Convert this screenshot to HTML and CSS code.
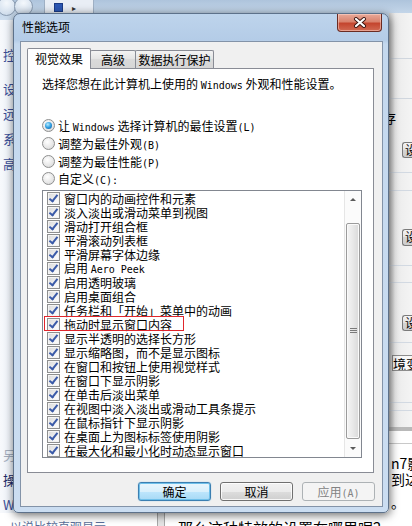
FILE: index.html
```html
<!DOCTYPE html>
<html lang="zh-CN">
<head>
    <meta charset="UTF-8">
    <meta name="viewport" content="width=device-width, initial-scale=1.0">
    <title>性能选项</title>
    <link rel="stylesheet" href="styles.css">
</head>
<body>

    <!-- window behind the dialog -->
    <div class="bg-top">
        <span class="nav-btn"></span>
        <span class="nav-btn"></span>
        <div class="bg-tool"><span class="bg-icon"></span><span class="bg-arrow">▸</span></div>
    </div>

    <div class="bg-left">
        <span class="side">控</span>
        <span class="side gap1">设</span>
        <span class="side">远</span>
        <span class="side">系</span>
        <span class="side">高</span>
        <span class="side gap2 pale">另</span>
        <span class="side dark">操</span>
        <span class="side">W</span>
    </div>

    <div class="bg-right">
        <div class="rp-head"></div>
        <div class="rp-block"></div>
        <span class="rp-char">存</span>
        <span class="rp-btn b1">设</span>
        <div class="rp-line l1"></div>
        <div class="rp-line l2"></div>
        <span class="rp-btn b2">设</span>
        <div class="rp-line l3"></div>
        <div class="rp-line l4"></div>
        <span class="rp-btn b3">设</span>
        <div class="rp-line l5"></div>
        <span class="rp-box">境变</span>
        <div class="rp-line l6"></div>
        <div class="rp-line l7"></div>
        <div class="rp-band"></div>
        <div class="rp-white">
            <div class="rp-sep"></div>
            <p class="rp-text t1">n7影</p>
            <p class="rp-text">到达</p>
            <p class="rp-text t3">。</p>
        </div>
    </div>

    <div class="bg-bottom">
        <span class="bb-left">以说比较直观显示</span>
        <span class="bb-bar"></span>
        <span class="bb-right">那么这种特效的设置在哪里呢？</span>
    </div>

    <!-- the dialog -->
    <div class="dialog">
        <div class="titlebar">
            <span class="title">性能选项</span>
            <button class="close">
                <svg width="14" height="11" viewBox="0 0 14 11">
                    <path d="M3 2 L11 9 M11 2 L3 9" stroke="#3b1410" stroke-width="4" stroke-linecap="round"/>
                    <path d="M3 2 L11 9 M11 2 L3 9" stroke="#ffffff" stroke-width="2.2" stroke-linecap="round"/>
                </svg>
            </button>
        </div>

        <div class="client">
            <div class="tabs">
                <div class="tab active">视觉效果</div>
                <div class="tab t2">高级</div>
                <div class="tab t3">数据执行保护</div>
            </div>

            <div class="panel">
                <p class="intro">选择您想在此计算机上使用的 <span class="lat">Windows</span> 外观和性能设置。</p>

                <div class="radios">
                    <div class="radio"><span class="rd on"></span><span>让 <span class="lat">Windows</span> 选择计算机的最佳设置<span class="lat">(L)</span></span></div>
                    <div class="radio"><span class="rd"></span><span>调整为最佳外观<span class="lat">(B)</span></span></div>
                    <div class="radio"><span class="rd"></span><span>调整为最佳性能<span class="lat">(P)</span></span></div>
                    <div class="radio"><span class="rd"></span><span>自定义<span class="lat">(C):</span></span></div>
                </div>

                <div class="listbox">
                    <div class="items">
                        <div class="item"><span class="cb"></span><span>窗口内的动画控件和元素</span></div>
                        <div class="item"><span class="cb"></span><span>淡入淡出或滑动菜单到视图</span></div>
                        <div class="item"><span class="cb"></span><span>滑动打开组合框</span></div>
                        <div class="item"><span class="cb"></span><span>平滑滚动列表框</span></div>
                        <div class="item"><span class="cb"></span><span>平滑屏幕字体边缘</span></div>
                        <div class="item"><span class="cb"></span><span>启用 <span class="lat">Aero Peek</span></span></div>
                        <div class="item"><span class="cb"></span><span>启用透明玻璃</span></div>
                        <div class="item"><span class="cb"></span><span>启用桌面组合</span></div>
                        <div class="item"><span class="cb"></span><span>任务栏和「开始」菜单中的动画</span></div>
                        <div class="item"><span class="cb"></span><span>拖动时显示窗口内容</span></div>
                        <div class="item"><span class="cb"></span><span>显示半透明的选择长方形</span></div>
                        <div class="item"><span class="cb"></span><span>显示缩略图，而不是显示图标</span></div>
                        <div class="item"><span class="cb"></span><span>在窗口和按钮上使用视觉样式</span></div>
                        <div class="item"><span class="cb"></span><span>在窗口下显示阴影</span></div>
                        <div class="item"><span class="cb"></span><span>在单击后淡出菜单</span></div>
                        <div class="item"><span class="cb"></span><span>在视图中淡入淡出或滑动工具条提示</span></div>
                        <div class="item"><span class="cb"></span><span>在鼠标指针下显示阴影</span></div>
                        <div class="item"><span class="cb"></span><span>在桌面上为图标标签使用阴影</span></div>
                        <div class="item"><span class="cb"></span><span>在最大化和最小化时动态显示窗口</span></div>
                    </div>
                    <div class="scrollbar">
                        <div class="sb-arrow"><span class="tri up"></span></div>
                        <div class="sb-track">
                            <div class="sb-thumb"><span class="grip"></span></div>
                        </div>
                        <div class="sb-arrow"><span class="tri down"></span></div>
                    </div>
                    <div class="mark"></div>
                </div>
            </div>

            <div class="buttons">
                <button class="btn default">确定</button>
                <button class="btn">取消</button>
                <button class="btn disabled">应用<span class="lat">(A)</span></button>
            </div>
        </div>
    </div>

</body>
</html>
```

FILE: styles.css
```css
body {
    margin: 0;
    width: 412px;
    height: 526px;
    overflow: hidden;
    position: relative;
    background: #ffffff;
    font-family: "Noto Sans CJK SC", "Liberation Sans", sans-serif;
    font-size: 12px;
    color: #000;
}
p {
    margin: 0;
}
.lat {
    font-family: "DejaVu Sans Mono", "Liberation Mono", monospace;
    font-size: 10px;
}

/* ---- window behind ---- */
.bg-top {
    position: absolute;
    left: 0;
    top: 0;
    width: 412px;
    height: 20px;
    background: linear-gradient(#aec4dc, #cfdff0);
    display: flex;
    align-items: flex-start;
}
.nav-btn {
    width: 17px;
    height: 17px;
    margin-top: -3px;
    margin-left: -3px;
    border: 1px solid #8a9bb0;
    border-radius: 50%;
    background: radial-gradient(circle at 50% 30%, #f4f8fc, #c6d6e8);
}
.nav-btn + .nav-btn {
    margin-left: -2px;
}
.bg-tool {
    margin-left: 11px;
    width: 48px;
    height: 14px;
    background: #e9eef5;
    border: 1px solid #9fb0c4;
    border-top: none;
    display: flex;
    align-items: center;
}
.bg-icon {
    width: 7px;
    height: 7px;
    margin-left: 9px;
    background: #2c57b3;
    border: 1px solid #1b3b85;
}
.bg-arrow {
    font-size: 8px;
    margin-left: 9px;
    color: #333;
}

.bg-left {
    position: absolute;
    left: 0;
    top: 20px;
    width: 20px;
    height: 506px;
    background: linear-gradient(90deg, #f7f9fc, #e6edf6);
    display: flex;
    flex-direction: column;
    padding-top: 22px;
    box-sizing: border-box;
}
.side {
    height: 25px;
    line-height: 25px;
    padding-left: 3px;
    font-size: 13px;
    color: #3a4e97;
}
.side.gap1 {
    margin-top: 9px;
}
.side.gap2 {
    margin-top: 266px;
}
.side.pale {
    color: #a3adbd;
}
.side.dark {
    color: #1c2c68;
}

.bg-right {
    position: absolute;
    left: 389px;
    top: 13px;
    width: 23px;
    height: 500px;
    background: linear-gradient(90deg, #cfcfcf, #ebebeb 6px, #f4f4f4);
    display: flex;
    flex-direction: column;
}
.rp-head {
    height: 45px;
    border-bottom: 1px solid #d0d6de;
    flex: none;
}
.rp-block {
    height: 39px;
    border-bottom: 1px solid #d0d6de;
    flex: none;
}
.rp-char {
    margin-top: 12px;
    margin-left: -6px;
    height: 14px;
    line-height: 14px;
    font-size: 13px;
}
.rp-btn {
    height: 16px;
    margin-left: 13px;
    box-sizing: border-box;
    border: 1px solid #7a7a7a;
    border-right: none;
    border-radius: 3px 0 0 3px;
    background: linear-gradient(#f4f4f4, #e2e2e2 50%, #d4d4d4 50%, #cdcdcd);
    font-size: 12px;
    line-height: 14px;
    padding-left: 2px;
    overflow: hidden;
    flex: none;
}
.rp-btn.b1 {
    margin-top: 17px;
}
.rp-btn.b2 {
    margin-top: 38px;
    height: 17px;
}
.rp-btn.b3 {
    margin-top: 32px;
}
.rp-line {
    height: 1px;
    background: #d2d9e2;
    flex: none;
}
.rp-line.l1 { margin-top: 14px; }
.rp-line.l2 { margin-top: 17px; }
.rp-line.l3 { margin-top: 19px; }
.rp-line.l4 { margin-top: 16px; }
.rp-line.l5 { margin-top: 11px; }
.rp-line.l6 { margin-top: 31px; }
.rp-line.l7 { margin-top: 7px; }
.rp-box {
    margin-top: 12px;
    margin-left: 3px;
    height: 16px;
    line-height: 16px;
    border: 1px solid #8c8c8c;
    border-right: none;
    background: #f8f8f8;
    font-size: 13px;
    white-space: nowrap;
    overflow: hidden;
    box-sizing: border-box;
    flex: none;
}
.rp-band {
    margin-top: 16px;
    height: 4px;
    background: #b9b9b9;
    flex: none;
}
.rp-white {
    flex: 1;
    background: #fff;
}
.rp-sep {
    margin-top: 12px;
    height: 1px;
    background: #c9c9c9;
}
.rp-text {
    height: 16px;
    line-height: 16px;
    font-size: 14px;
    white-space: nowrap;
    padding-left: 2px;
}
.rp-text.t1 {
    margin-top: 11px;
}
.rp-text.t3 {
    margin-top: 7px;
}

.bg-bottom {
    position: absolute;
    left: 0;
    top: 513px;
    width: 412px;
    height: 13px;
    display: flex;
    align-items: flex-start;
    background: #fff;
}
.bb-left {
    margin-left: 10px;
    margin-top: 6px;
    width: 147px;
    font-size: 12px;
    line-height: 16px;
    color: #5a6f9a;
    white-space: nowrap;
}
.bb-bar {
    width: 6px;
    height: 13px;
    background: #e4e4e4;
    border-left: 1px solid #a8a8a8;
    border-right: 1px solid #a8a8a8;
}
.bb-right {
    margin-left: 13px;
    margin-top: 6px;
    font-size: 15px;
    line-height: 18px;
    white-space: nowrap;
}

/* ---- dialog ---- */
.dialog {
    position: absolute;
    left: 13px;
    top: 13px;
    width: 376px;
    height: 500px;
    box-sizing: border-box;
    z-index: 2;
    border: 1px solid #5d718a;
    border-radius: 7px 7px 5px 5px;
    background: linear-gradient(#bed4ec, #b4cce7 26px, #c4d8ee 30px, #cbddf1);
    box-shadow: 1px 2px 10px rgba(0, 0, 0, 0.6);
    padding: 0 5px 5px 6px;
    display: flex;
    flex-direction: column;
}
.titlebar {
    height: 27px;
    display: flex;
    align-items: flex-start;
    flex: none;
}
.title {
    margin-left: 2px;
    margin-top: 5px;
    line-height: 16px;
    font-size: 12px;
}
.close {
    margin-left: auto;
    margin-right: 1px;
    width: 45px;
    height: 18px;
    padding: 0;
    border: 1px solid #6a2b22;
    border-top: none;
    border-radius: 0 0 4px 4px;
    background: linear-gradient(#e9a999, #d9826d 45%, #c4452e 55%, #d16a53);
    box-shadow: inset 0 0 0 1px rgba(255, 220, 210, 0.5);
    display: flex;
    align-items: center;
    justify-content: center;
}

.client {
    flex: 1;
    background: #f0f0f0;
    border: 1px solid #8393a8;
    padding: 6px 8px 0 6px;
    display: flex;
    flex-direction: column;
}
.tabs {
    display: flex;
    align-items: flex-end;
    height: 20px;
    flex: none;
}
.tab {
    height: 18px;
    box-sizing: border-box;
    border: 1px solid #898c95;
    border-bottom: none;
    border-radius: 2px 2px 0 0;
    background: linear-gradient(#f3f3f3, #e3e3e3 50%, #dadada 50%, #d6d6d6);
    text-align: center;
    line-height: 18px;
    margin-left: -1px;
}
.tab.active {
    height: 21px;
    width: 64px;
    margin-left: 0;
    margin-bottom: -1px;
    background: #fff;
    position: relative;
    z-index: 1;
    line-height: 20px;
}
.tab.t2 {
    width: 46px;
}
.tab.t3 {
    width: 79px;
}

.panel {
    height: 405px;
    box-sizing: border-box;
    border: 1px solid #898c95;
    background: #fff;
    padding: 8px 0 0 14px;
    flex: none;
}
.intro {
    line-height: 14px;
    white-space: nowrap;
}
.radios {
    margin-top: 24px;
}
.radio {
    height: 17.7px;
    display: flex;
    align-items: center;
    white-space: nowrap;
}
.rd {
    width: 13px;
    height: 13px;
    box-sizing: border-box;
    border: 1px solid #8e8f8f;
    border-radius: 50%;
    background: radial-gradient(circle at 40% 35%, #ffffff, #e6e6e6 60%, #cfcfcf);
    margin-right: 3px;
    display: flex;
    align-items: center;
    justify-content: center;
    flex: none;
}
.rd.on::after {
    content: "";
    width: 7px;
    height: 7px;
    border-radius: 50%;
    background: radial-gradient(circle at 40% 35%, #b6ecff, #2f9de0 50%, #0f5596);
}

.listbox {
    margin-top: 2px;
    width: 320px;
    height: 268px;
    box-sizing: border-box;
    border: 1px solid #828790;
    display: flex;
    position: relative;
}
.items {
    flex: 1;
    padding: 1px 0 0 4px;
    overflow: hidden;
}
.item {
    height: 14px;
    display: flex;
    align-items: center;
    white-space: nowrap;
    line-height: 14px;
}
.cb {
    width: 13px;
    height: 13px;
    box-sizing: border-box;
    border: 1px solid #8e8f8f;
    background: linear-gradient(135deg, #d8d8d8, #f6f6f6 70%, #ffffff);
    box-shadow: inset 0 0 0 1px #f4f4f4;
    margin-right: 4px;
    position: relative;
    flex: none;
}
.cb::after {
    content: "";
    position: absolute;
    left: 3px;
    top: 0px;
    width: 3px;
    height: 7px;
    border: solid #3a5aa8;
    border-width: 0 2px 2px 0;
    transform: rotate(38deg);
}

.scrollbar {
    width: 17px;
    background: #fbfbfb;
    border-left: 1px solid #e6e6e6;
    box-sizing: border-box;
    display: flex;
    flex-direction: column;
}
.sb-arrow {
    height: 17px;
    display: flex;
    align-items: center;
    justify-content: center;
    flex: none;
}
.tri {
    width: 0;
    height: 0;
    border-left: 3px solid transparent;
    border-right: 3px solid transparent;
}
.tri.up {
    border-bottom: 3px solid #5a5a5a;
}
.tri.down {
    border-top: 3px solid #5a5a5a;
}
.sb-track {
    flex: 1;
    padding: 15px 1px 1px 1px;
    display: flex;
}
.sb-thumb {
    flex: 1;
    box-sizing: border-box;
    border: 1px solid #9b9b9b;
    border-radius: 2px;
    background: linear-gradient(90deg, #f5f5f5, #e8e8e8 50%, #d9d9d9);
    box-shadow: inset 0 0 0 1px #fafafa;
    display: flex;
    align-items: center;
    justify-content: center;
}
.grip {
    width: 7px;
    height: 5px;
    background: repeating-linear-gradient(#7a7a7a 0 1px, transparent 1px 2px);
}
.mark {
    position: absolute;
    left: 1px;
    top: 125px;
    width: 140px;
    height: 15px;
    box-sizing: border-box;
    border: 1px solid #e0262c;
}

.buttons {
    display: flex;
    justify-content: flex-end;
    gap: 9px;
    padding-top: 9px;
    margin-right: -1px;
}
.btn {
    width: 73px;
    height: 19px;
    padding: 0;
    box-sizing: border-box;
    border: 1px solid #707070;
    border-radius: 3px;
    background: linear-gradient(#f2f2f2, #ebebeb 50%, #dddddd 50%, #cfcfcf);
    box-shadow: inset 0 0 0 1px rgba(255, 255, 255, 0.8);
    font-family: "Noto Sans CJK SC", sans-serif;
    font-size: 12px;
    line-height: 17px;
    color: #000;
}
.btn.default {
    border-color: #3c7fb1;
    background: linear-gradient(#eaf6fd, #d9f0fc 50%, #bee6fd 50%, #a7d9f5);
    box-shadow: inset 0 0 0 1px #6fc0ea, 0 0 1px #5ab0e0;
}
.btn.disabled {
    border-color: #adb2b5;
    background: #f4f4f4;
    color: #838383;
    box-shadow: none;
}
```
